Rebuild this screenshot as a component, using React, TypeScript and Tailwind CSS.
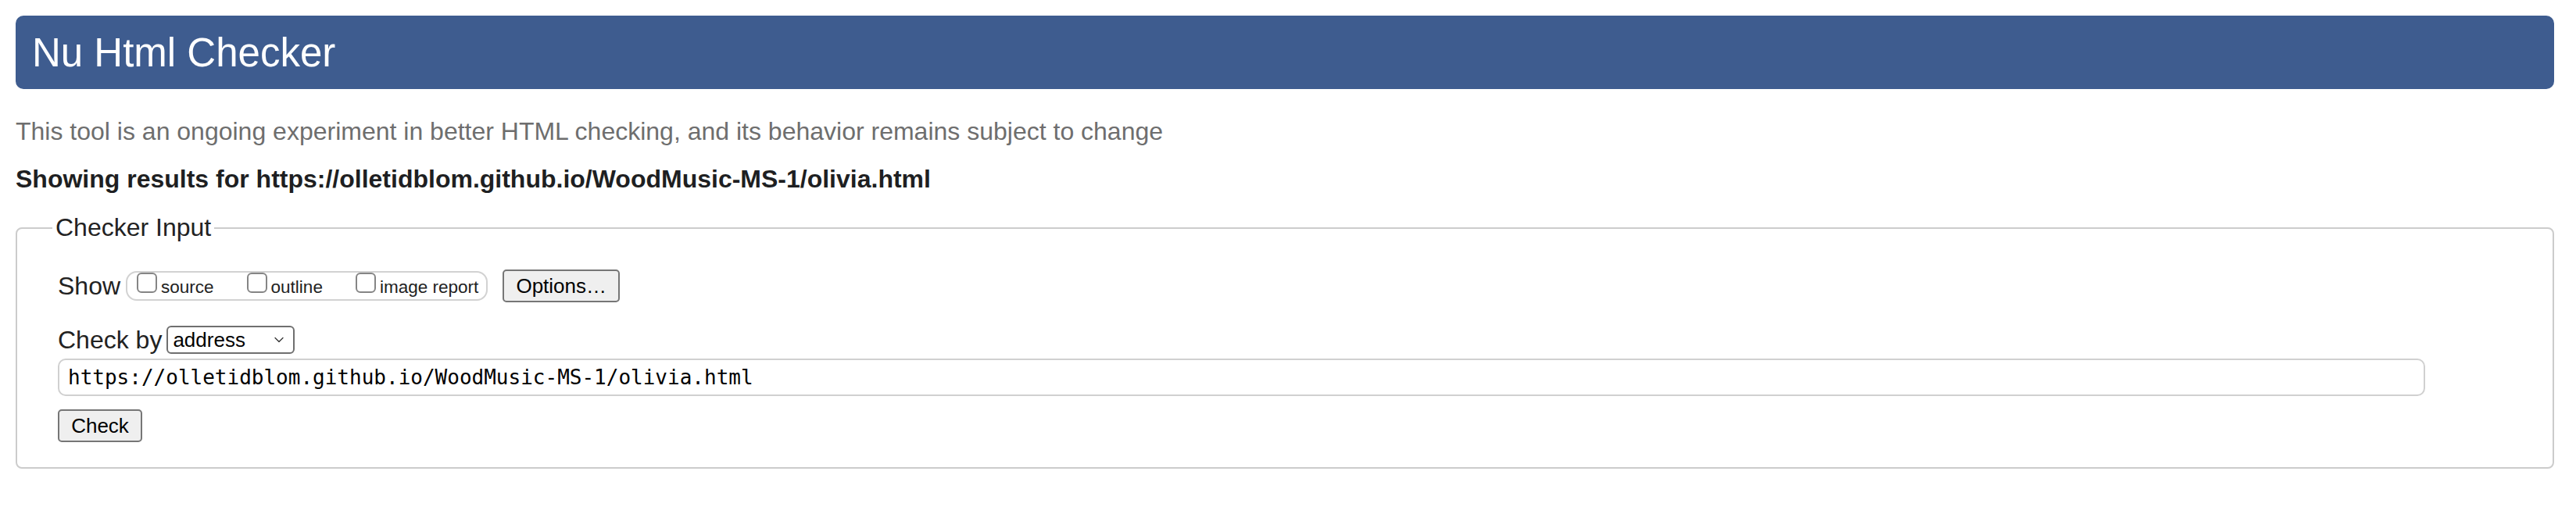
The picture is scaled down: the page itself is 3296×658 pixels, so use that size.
import { ChevronDown } from 'lucide-react'

const sans = 'font-["Liberation_Sans",Arial,sans-serif]'

function Box({ label }: { label: string }) {
  return (
    <span className="flex items-start">
      <span className="h-[26px] w-[26px] rounded-[6px] border-2 border-[#858585] bg-white" />
      <span className="ml-[5px] mt-[6px] text-[22.5px] leading-[26px] text-[#222]">{label}</span>
    </span>
  )
}

export default function App() {
  return (
    <div className={`${sans} min-h-[658px] bg-white pt-[20px] pl-[20px] pr-[28px]`}>
      <header className="flex h-[94px] items-center rounded-[10px] bg-[#3e5c8f] px-[21px]">
        <h1 className="text-[51px] leading-none text-white">Nu Html Checker</h1>
      </header>

      <p className="mt-[36px] text-[32px] leading-[37px] text-[#6e6e6e]">
        This tool is an ongoing experiment in better HTML checking, and its behavior remains subject to change
      </p>
      <p className="mt-[24px] text-[32px] font-bold leading-[37px] text-[#1e1f22]">
        Showing results for https://olletidblom.github.io/WoodMusic-MS-1/olivia.html
      </p>

      <fieldset className="mt-[25px] rounded-[8px] border-2 border-[#cccccc] pb-[32px]">
        <legend className="ml-[45px] px-[4px] text-[32px] leading-[37px] text-[#222]">Checker Input</legend>

        <div className="pl-[52px]">
          <div className="mt-[35px] flex h-[42px] items-center">
            <span className="text-[32px] leading-[37px] text-[#222]">Show</span>
            <div className="ml-[7px] flex h-[38px] items-start gap-[42px] rounded-[14px] border-2 border-[#d2d2d2] pl-[12px] pr-[10px]">
              <Box label="source" />
              <Box label="outline" />
              <Box label="image report" />
            </div>
            <button className="ml-[19px] flex h-[42px] w-[150px] items-center justify-center rounded-[5px] border-2 border-[#767676] bg-[#efefef] text-[26px] text-black">
              Options…
            </button>
          </div>

          <div className="mt-[30px] flex h-[36px] items-center">
            <span className="text-[32px] leading-[37px] text-[#222]">Check by</span>
            <div className="ml-[6px] flex h-[36px] w-[164px] items-center justify-between rounded-[6px] border-2 border-[#6f6f6f] bg-white pl-[6px] pr-[8px]">
              <span className="text-[26px] leading-[30px] text-black">address</span>
              <ChevronDown size={20} strokeWidth={1.5} className="text-[#333]" />
            </div>
          </div>

          <div className="mt-[6px] flex h-[48px] w-[3029px] items-center rounded-[10px] border-2 border-[#d0d0d0] pl-[11px]">
            <span className='font-["DejaVu_Sans_Mono",monospace] text-[26px] leading-[30px] text-black'>
              https://olletidblom.github.io/WoodMusic-MS-1/olivia.html
            </span>
          </div>

          <button className="mt-[17px] flex h-[42px] w-[108px] items-center justify-center rounded-[5px] border-2 border-[#767676] bg-[#efefef] text-[26px] text-black">
            Check
          </button>
        </div>
      </fieldset>
    </div>
  )
}
